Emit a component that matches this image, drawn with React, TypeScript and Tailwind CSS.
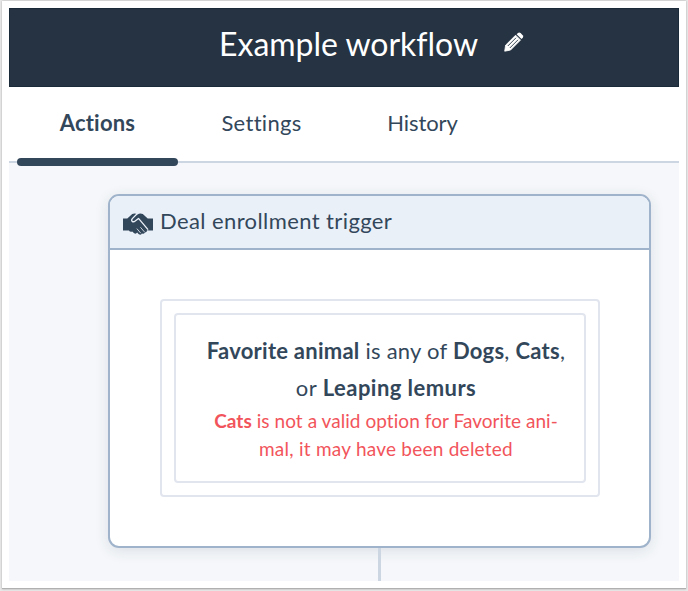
import clsx from 'clsx';

const tabs = [
  { name: 'Actions', className: 'w-[161px] tracking-[0.2px] font-bold', current: true },
  { name: 'Settings', className: 'w-[167px] tracking-[0.3px]', current: false },
  { name: 'History', className: 'w-[155px] tracking-[-0.1px]', current: false },
];

function PencilIcon() {
  return (
    <svg width="20" height="20" viewBox="0 0 20 20" fill="none">
      <path
        d="M0.7 19.2 1.6 13.2 11.6 3.2 16.5 8.1 6.5 18.1Z"
        fill="#fff"
        stroke="#fff"
        strokeWidth="0.8"
        strokeLinejoin="round"
      />
      <path d="M3.8 14 12 5.8M5.8 16 14 7.8" stroke="#253342" strokeWidth="0.9" />
      <path
        d="M12.6 2.2 14 0.9Q15.3 0 16.6 1.1L18.7 3.2Q19.8 4.5 18.8 5.7L17.5 7.1Z"
        fill="#fff"
      />
    </svg>
  );
}

function HandshakeIcon() {
  return (
    <svg className="mt-[3px] h-[22px] w-[30px] shrink-0" viewBox="0 0 91 66" fill="none">
      <path
        d="M0 16H13L28 3Q33 0 40 2L44 4Q52-1 60 3L75 16H91V53H79L73 52Q73 59 66 59Q64 64 58 62Q54 68 47 63L43 59Q39 65 33 60L28 56Q21 58 18 53H0Z"
        fill="#33475b"
      />
      <path
        d="M43 2 29 16Q24 22 28 25Q32 28 38 23L47 16 76 50"
        stroke="#eaf0f8"
        strokeWidth="4"
        strokeLinejoin="round"
      />
      <path d="M53 43 65 57M42 47 54 61" stroke="#eaf0f8" strokeWidth="2.5" />
    </svg>
  );
}

function Header() {
  return (
    <header className="flex h-[79px] items-start border border-[#1b2a39] bg-[#253342] pl-[209px] text-white">
      <h1 className="mt-[15px] w-[285px] text-[32px] leading-[40px] tracking-[-0.02px] whitespace-nowrap">
        Example workflow
      </h1>
      <div className="mt-[23px]">
        <PencilIcon />
      </div>
    </header>
  );
}

function Tabs() {
  return (
    <nav className="flex h-[76px] border-b-2 border-[#cbd6e2] bg-white pl-2">
      {tabs.map((tab) => (
        <div
          key={tab.name}
          className={clsx(
            'flex h-[79px] shrink-0 flex-col items-center justify-between text-[22px] leading-[30px] whitespace-nowrap',
            tab.className
          )}
        >
          <span className="mt-[21px]">{tab.name}</span>
          {tab.current && <div className="h-2 w-full rounded-[4px] bg-[#33475b]" />}
        </div>
      ))}
    </nav>
  );
}

function TriggerCard() {
  return (
    <section className="h-[355px] w-[543px] overflow-hidden rounded-[11px] border-2 border-[#9fb3cb] bg-white shadow-[0_3px_14px_rgba(45,62,80,0.12)]">
      <div className="flex h-[54px] items-center border-b-2 border-[#9fb3cb] bg-[#eaf0f8] pl-[13px]">
        <HandshakeIcon />
        <h2 className="-mt-[2px] ml-[7px] text-[22px] leading-[30px] tracking-[0.4px] whitespace-nowrap">
          Deal enrollment trigger
        </h2>
      </div>
      <div className="mt-[49px] ml-[50px] h-[198px] w-[440px] rounded-[4px] border-2 border-[#e1e5ee] p-3">
        <div className="h-[170px] rounded-[4px] border-2 border-[#e1e5ee] pt-[17px] pl-[12px] text-center whitespace-nowrap">
          <p className="text-[22px] leading-[37px]">
            <span className="tracking-[0.25px]">
              <b>Favorite animal</b> is any of <b>Dogs</b>, <b>Cats</b>,
            </span>
            <br />
            <span className="tracking-[0.45px]">
              or <b>Leaping lemurs</b>
            </span>
          </p>
          <p className="mt-px text-[19px] leading-[28px] text-[#f2545b]">
            <span className="tracking-[0.05px]">
              <b>Cats</b> is not a valid option for Favorite ani-
            </span>
            <br />
            <span className="tracking-[0.24px]">mal, it may have been deleted</span>
          </p>
        </div>
      </div>
    </section>
  );
}

export default function App() {
  return (
    <div className="h-[591px] w-[688px] bg-[#e9e9e9] pt-px pl-[2px] font-['Lato',sans-serif] text-[#33475b]">
      <div className="h-[588px] w-[684px] border-b border-[#b0b0b0] bg-white px-[7px] pt-[7px] shadow-[0_0_2px_rgba(0,0,0,0.3)]">
        <Header />
        <Tabs />
        <main className="flex h-[418px] flex-col items-center bg-[#f5f7fa] pt-[31px] pl-[71px]">
          <TriggerCard />
          <div className="h-[33px] w-[3px] bg-[#cbd6e2]" />
        </main>
      </div>
    </div>
  );
}
